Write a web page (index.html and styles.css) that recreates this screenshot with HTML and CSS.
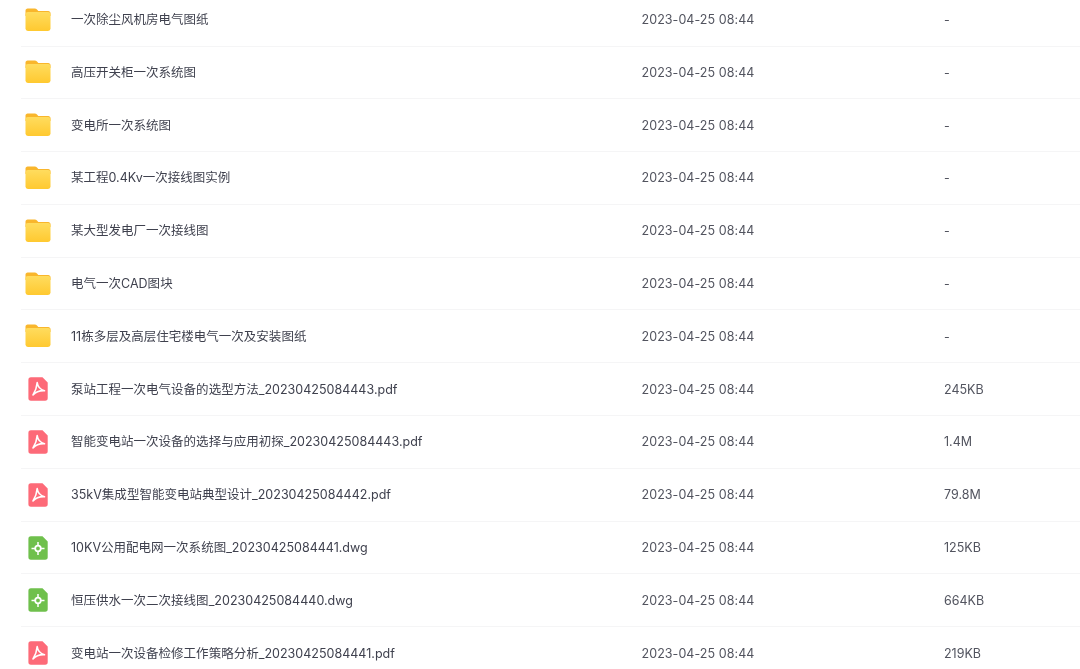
FILE: index.html
```html
<!DOCTYPE html>
<html lang="en">
<head>
    <meta charset="UTF-8">
    <title>文件列表</title>
    <link rel="stylesheet" href="styles.css">
</head>
<body>
    <svg class="defs" width="0" height="0">
        <defs>
            <linearGradient id="folder-fill" x1="0" y1="0" x2="0" y2="1">
                <stop offset="0" stop-color="#ffdc5e"/>
                <stop offset="1" stop-color="#ffc930"/>
            </linearGradient>
        </defs>
        <symbol id="folder" viewBox="0 0 26 24">
            <path d="M2.600 .5h7.200c.9 0 1.600.4 2.200 1l1.300 1.400h10c1.200 0 2.200 1 2.200 2.200v3H.5V2.700C.5 1.500 1.400.5 2.600.5z" fill="#f9b62c"/>
            <rect x=".5" y="4" width="25" height="19" rx="2.400" fill="url(#folder-fill)"/>
        </symbol>
        <symbol id="pdf" viewBox="0 0 20 24">
            <path d="M3 .3h11.500L19.700 5.500V21a2.600 2.600 0 0 1-2.600 2.700H3A2.600 2.600 0 0 1 .4 21V3A2.600 2.600 0 0 1 3 .3z" fill="#fd6a78"/>
            <path d="M9.200 5.500c.4 3.500 2.800 7 7.300 8.200-3.800-.2-8.300.8-11.500 4.300 2-3.200 3.800-7.700 4.200-12.500z" fill="none" stroke="#fff" stroke-width="1.600" stroke-linejoin="round"/>
        </symbol>
        <symbol id="dwg" viewBox="0 0 20 24">
            <path d="M3 .3h11.500L19.700 5.500V21a2.600 2.600 0 0 1-2.600 2.700H3A2.600 2.600 0 0 1 .4 21V3A2.600 2.600 0 0 1 3 .3z" fill="#6fc04c"/>
            <circle cx="10" cy="12.500" r="2.800" fill="none" stroke="#fff" stroke-width="1.800"/>
            <path d="M10 6v3.500M10 15.500V19M3.500 12.500H7M13 12.500h3.500" stroke="#fff" stroke-width="1.500"/>
        </symbol>
    </svg>

    <div class="file-list">
        <div class="file-row">
            <svg class="icon icon-folder"><use href="#folder"/></svg>
            <span class="name">一次除尘风机房电气图纸</span>
            <span class="date">2023-04-25 08:44</span>
            <span class="size">-</span>
        </div>
        <div class="file-row">
            <svg class="icon icon-folder"><use href="#folder"/></svg>
            <span class="name">高压开关柜一次系统图</span>
            <span class="date">2023-04-25 08:44</span>
            <span class="size">-</span>
        </div>
        <div class="file-row">
            <svg class="icon icon-folder"><use href="#folder"/></svg>
            <span class="name">变电所一次系统图</span>
            <span class="date">2023-04-25 08:44</span>
            <span class="size">-</span>
        </div>
        <div class="file-row">
            <svg class="icon icon-folder"><use href="#folder"/></svg>
            <span class="name">某工程0.4Kv一次接线图实例</span>
            <span class="date">2023-04-25 08:44</span>
            <span class="size">-</span>
        </div>
        <div class="file-row">
            <svg class="icon icon-folder"><use href="#folder"/></svg>
            <span class="name">某大型发电厂一次接线图</span>
            <span class="date">2023-04-25 08:44</span>
            <span class="size">-</span>
        </div>
        <div class="file-row">
            <svg class="icon icon-folder"><use href="#folder"/></svg>
            <span class="name">电气一次CAD图块</span>
            <span class="date">2023-04-25 08:44</span>
            <span class="size">-</span>
        </div>
        <div class="file-row">
            <svg class="icon icon-folder"><use href="#folder"/></svg>
            <span class="name">11栋多层及高层住宅楼电气一次及安装图纸</span>
            <span class="date">2023-04-25 08:44</span>
            <span class="size">-</span>
        </div>
        <div class="file-row">
            <svg class="icon icon-file"><use href="#pdf"/></svg>
            <span class="name">泵站工程一次电气设备的选型方法_20230425084443.pdf</span>
            <span class="date">2023-04-25 08:44</span>
            <span class="size">245KB</span>
        </div>
        <div class="file-row">
            <svg class="icon icon-file"><use href="#pdf"/></svg>
            <span class="name">智能变电站一次设备的选择与应用初探_20230425084443.pdf</span>
            <span class="date">2023-04-25 08:44</span>
            <span class="size">1.4M</span>
        </div>
        <div class="file-row">
            <svg class="icon icon-file"><use href="#pdf"/></svg>
            <span class="name">35kV集成型智能变电站典型设计_20230425084442.pdf</span>
            <span class="date">2023-04-25 08:44</span>
            <span class="size">79.8M</span>
        </div>
        <div class="file-row">
            <svg class="icon icon-file"><use href="#dwg"/></svg>
            <span class="name">10KV公用配电网一次系统图_20230425084441.dwg</span>
            <span class="date">2023-04-25 08:44</span>
            <span class="size">125KB</span>
        </div>
        <div class="file-row">
            <svg class="icon icon-file"><use href="#dwg"/></svg>
            <span class="name">恒压供水一次二次接线图_20230425084440.dwg</span>
            <span class="date">2023-04-25 08:44</span>
            <span class="size">664KB</span>
        </div>
        <div class="file-row">
            <svg class="icon icon-file"><use href="#pdf"/></svg>
            <span class="name">变电站一次设备检修工作策略分析_20230425084441.pdf</span>
            <span class="date">2023-04-25 08:44</span>
            <span class="size">219KB</span>
        </div>
    </div>
</body>
</html>
```

FILE: styles.css
```css
html, body {
    height: 100%;
    overflow: hidden;
}
body {
    margin: 0;
    background-color: #ffffff;
    font-family: "Inter", "Noto Sans CJK SC", sans-serif;
    font-size: 12.5px;
    color: #3f414e;
}
.defs {
    position: absolute; /* display:none would break the gradient */
}
.file-list {
    margin: -6.3px 0 0 21px;
    filter: blur(0.3px); /* the source picture is a little soft */
}
.file-row {
    display: grid;
    grid-template-columns: 50px 570.5px 302.5px 1fr;
    align-items: center;
    height: 52.8px;
    box-sizing: border-box;
    border-bottom: 1px solid #f5f5f6;
}
.icon {
    display: block;
}
.icon-folder {
    width: 26px;
    height: 24px;
    margin-left: 4px;
}
.icon-file {
    width: 20px;
    height: 24px;
    margin-left: 7px;
}
.name {
    color: #3f414e;
    padding-bottom: 2px;
    letter-spacing: 0.012px;
}
.date, .size {
    color: #52545f;
}
.date {
    letter-spacing: 0.06px;
}
```
